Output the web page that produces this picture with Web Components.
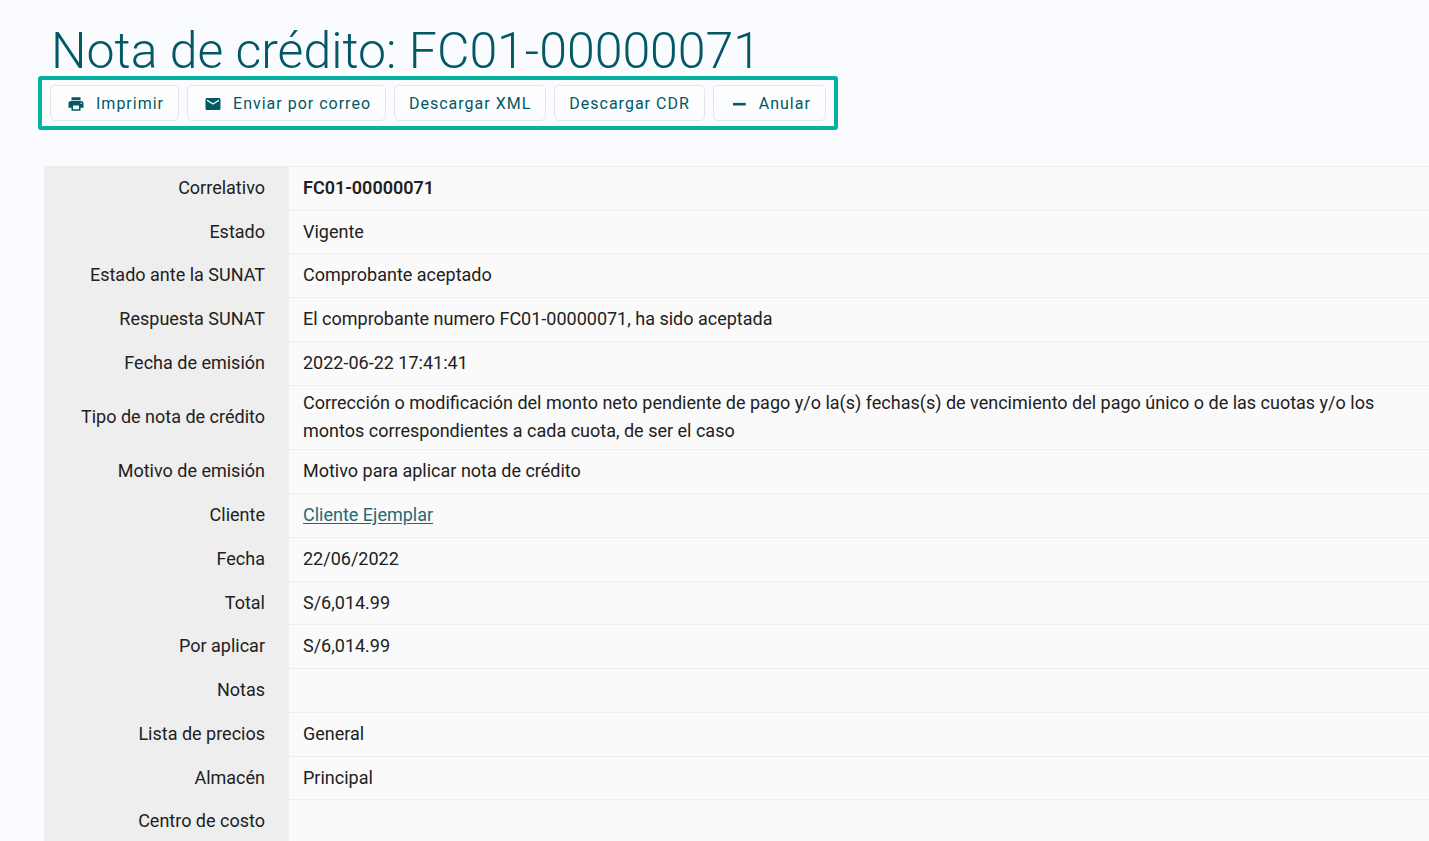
<!DOCTYPE html>
<html lang="es">
<head>
<meta charset="utf-8">
<meta name="viewport" content="width=device-width, initial-scale=1">
<title>Nota de crédito: FC01-00000071</title>
<style>
  body {
    margin: 0;
    background: #fafbff;
    color: #212121;
    font: 400 18px/28px Roboto, "Liberation Sans", sans-serif;
    --brand: #025864;
    --accent: #04b09f;
  }
</style>
</head>
<body>
<credit-note-page>
  <span slot="title">Nota de crédito: FC01-00000071</span>
  <action-bar slot="actions">
    <action-button icon="print">Imprimir</action-button>
    <action-button icon="mail">Enviar por correo</action-button>
    <action-button>Descargar XML</action-button>
    <action-button>Descargar CDR</action-button>
    <action-button icon="remove">Anular</action-button>
  </action-bar>
  <detail-table></detail-table>
</credit-note-page>

<script>
  const attach = (host, html) => {
    host.attachShadow({ mode: "open" }).innerHTML = html;
  };

  const ICONS = {
    print: "M19 8H5c-1.660 0-3 1.340-3 3v6h4v4h12v-4h4v-6c0-1.660-1.340-3-3-3zm-3 11H8v-5h8v5zm3-7c-.55 0-1-.45-1-1s.45-1 1-1 1 .45 1 1-.45 1-1 1zm-1-9H6v4h12V3z",
    mail: "M20 4H4c-1.100 0-1.990.9-1.990 2L2 18c0 1.100.9 2 2 2h16c1.100 0 2-.9 2-2V6c0-1.100-.9-2-2-2zm0 4l-8 5-8-5V6l8 5 8-5v2z",
    remove: "M4 10.500h17v3.500H4z"
  };

  customElements.define("credit-note-page", class extends HTMLElement {
    constructor() {
      super();
      attach(this, `
        <style>
          :host { display: block; padding: 26px 0 0 38px; }
          h1 { margin: 0; padding-left: 13px; color: var(--brand); font-size: 50px; font-weight: 300; line-height: 50px; }
          main { margin: 36px 0 0 6px; }
        </style>
        <header>
          <h1><slot name="title"></slot></h1>
          <slot name="actions"></slot>
        </header>
        <main><slot></slot></main>`);
    }
  });

  customElements.define("action-bar", class extends HTMLElement {
    constructor() {
      super();
      attach(this, `
        <style>
          :host { display: flex; flex-wrap: wrap; gap: 8px; box-sizing: border-box; width: fit-content; max-width: 100%; padding: 5px 8px; border: 4px solid var(--accent); border-radius: 3px; }
        </style>
        <slot></slot>`);
    }
  });

  customElements.define("action-button", class extends HTMLElement {
    constructor() {
      super();
      const path = ICONS[this.getAttribute("icon")];
      const icon = path ? `<svg viewBox="0 0 24 24" aria-hidden="true"><path d="${path}"/></svg>` : "";
      attach(this, `
        <style>
          :host { display: block; }
          button { display: flex; align-items: center; gap: 11px; height: 36px; margin: 0; padding: 2px 14px 0; border: 1px solid #e4e5e8; border-radius: 5px; background: linear-gradient(#ffffff, #fafbff); color: var(--brand); font: 400 16px/20px Roboto, "Liberation Sans", sans-serif; letter-spacing: 1px; cursor: pointer; }
          svg { width: 18px; height: 18px; margin-left: 2px; fill: currentColor; }
        </style>
        <button type="button">${icon}<slot></slot></button>`);
    }
  });

  const DETAILS = [
    ["Correlativo", "<strong>FC01-00000071</strong>"],
    ["Estado", "Vigente"],
    ["Estado ante la SUNAT", "Comprobante aceptado"],
    ["Respuesta SUNAT", "El comprobante numero FC01-00000071, ha sido aceptada"],
    ["Fecha de emisión", "2022-06-22 17:41:41"],
    ["Tipo de nota de crédito", "Corrección o modificación del monto neto pendiente de pago y/o la(s) fechas(s) de vencimiento del pago único o de las cuotas y/o los montos correspondientes a cada cuota, de ser el caso"],
    ["Motivo de emisión", "Motivo para aplicar nota de crédito"],
    ["Cliente", '<a href="#cliente">Cliente Ejemplar</a>'],
    ["Fecha", "22/06/2022"],
    ["Total", "S/6,014.99"],
    ["Por aplicar", "S/6,014.99"],
    ["Notas", ""],
    ["Lista de precios", "General"],
    ["Almacén", "Principal"],
    ["Centro de costo", ""]
  ];

  customElements.define("detail-table", class extends HTMLElement {
    constructor() {
      super();
      const rows = DETAILS.map(([label, value]) => `<tr><th scope="row">${label}</th><td>${value}</td></tr>`).join("");
      attach(this, `
        <style>
          :host { display: block; }
          table { width: 100%; border-spacing: 0; background: #fafafa; }
          tr { height: 44px; }
          tr:nth-child(4n + 2) { height: 43px; }
          th, td { box-sizing: border-box; padding: 3px 24px 4px 14px; vertical-align: middle; border-top: 1px solid #eeeeee; }
          th { width: 245px; background: #eeeeee; font-weight: 400; text-align: right; }
          td { text-align: left; }
          strong { font-weight: 600; }
          a { color: #226a75; text-underline-offset: 2px; }
        </style>
        <table><tbody>${rows}</tbody></table>`);
    }
  });
</script>
</body>
</html>
